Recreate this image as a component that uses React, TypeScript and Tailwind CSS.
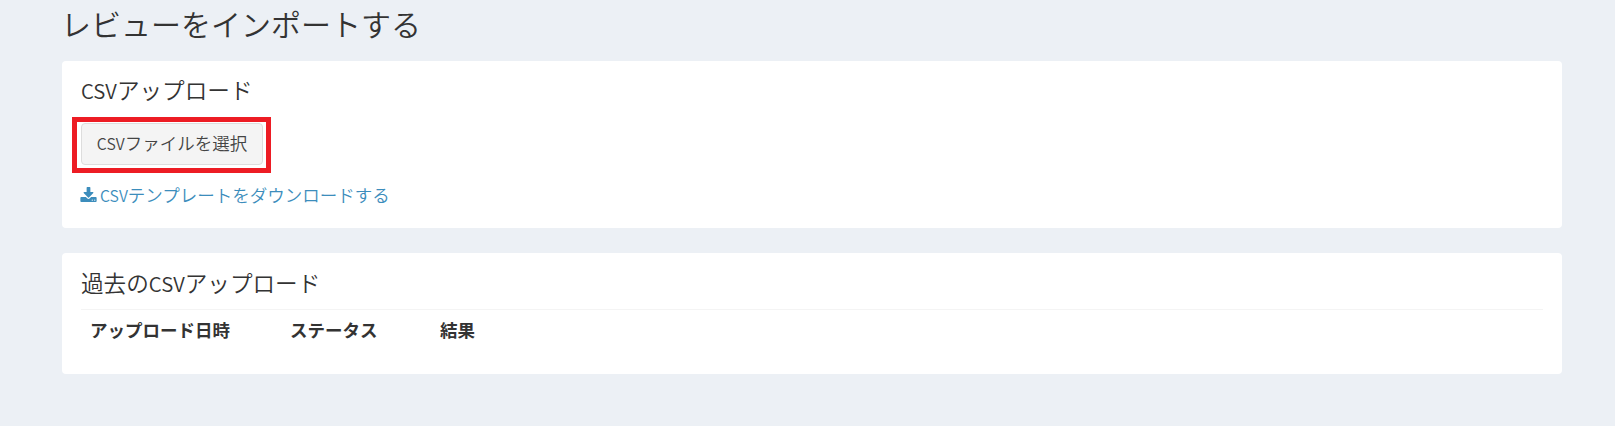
const columns = [
  { label: 'アップロード日時', width: 'w-[200px]' },
  { label: 'ステータス', width: 'w-[150px]' },
  { label: '結果', width: 'w-auto' },
];

function Csv() {
  return <span className="text-[0.9em] leading-none">CSV</span>;
}

function DownloadIcon() {
  return (
    <svg className="h-4 w-[17px] shrink-0 fill-current pb-px" viewBox="0 0 1664 1536" aria-hidden="true">
      <path d="M1280 1344q0-26-19-45t-45-19-45 19-19 45 19 45 45 19 45-19 19-45zM1536 1344q0-26-19-45t-45-19-45 19-19 45 19 45 45 19 45-19 19-45zM1664 1120v320q0 40-28 68t-68 28h-1472q-40 0-68-28t-28-68v-320q0-40 28-68t68-28h465l135 136q58 56 136 56t136-56l136-136h464q40 0 68 28t28 68zM1339 551q17 41-14 70l-448 448q-18 19-45 19t-45-19l-448-448q-31-29-14-70 17-39 59-39h256v-448q0-26 19-45t45-19h256q26 0 45 19t19 45v448h256q42 0 59 39z" />
    </svg>
  );
}

export default function App() {
  return (
    <div className="min-h-screen bg-[#ecf0f5] pl-[62px] pr-[53px] font-['Noto_Sans_CJK_JP',sans-serif] text-[17.5px] text-[#333]">
      <h1 className="-ml-px h-[61px] pt-[3px] text-[30px] font-[350] leading-[40px]">レビューをインポートする</h1>

      <section className="h-[167px] rounded-[4px] bg-white px-[19px] pt-[14px]">
        <h2 className="h-[30px] text-[22.6px] font-[350] leading-[30px]"><Csv />アップロード</h2>
        <div className="-ml-[9px] mt-3 h-[56px] w-[199px] border-[5px] border-[#ed1c24] pb-[3px] pl-1 pr-[3px] pt-px">
          <button className="flex h-full w-full items-center justify-center whitespace-nowrap rounded-[4px] border border-[#ddd] bg-[#f4f4f4] pb-[2px] font-[350] text-[#444]">
            <span className="leading-6"><Csv />ファイルを選択</span>
          </button>
        </div>
        <a className="-ml-px mt-[9px] flex h-[26px] items-center gap-[3px] font-[350] leading-[26px] text-[#3c8dbc]" href="#">
          <DownloadIcon />
          <span><Csv />テンプレートをダウンロードする</span>
        </a>
      </section>

      <section className="mt-[25px] h-[121px] rounded-[4px] bg-white px-[19px] pt-[15px]">
        <h2 className="h-[30px] text-[22.6px] font-[350] leading-[30px]">過去の<Csv />アップロード</h2>
        <table className="mt-[11px] w-full table-fixed border-t border-[#f4f4f4] text-left">
          <thead>
            <tr>
              {columns.map((col) => (
                <th key={col.label} className={`${col.width} px-[9px] py-[7px] font-bold leading-[25px]`}>{col.label}</th>
              ))}
            </tr>
          </thead>
        </table>
      </section>
    </div>
  );
}
